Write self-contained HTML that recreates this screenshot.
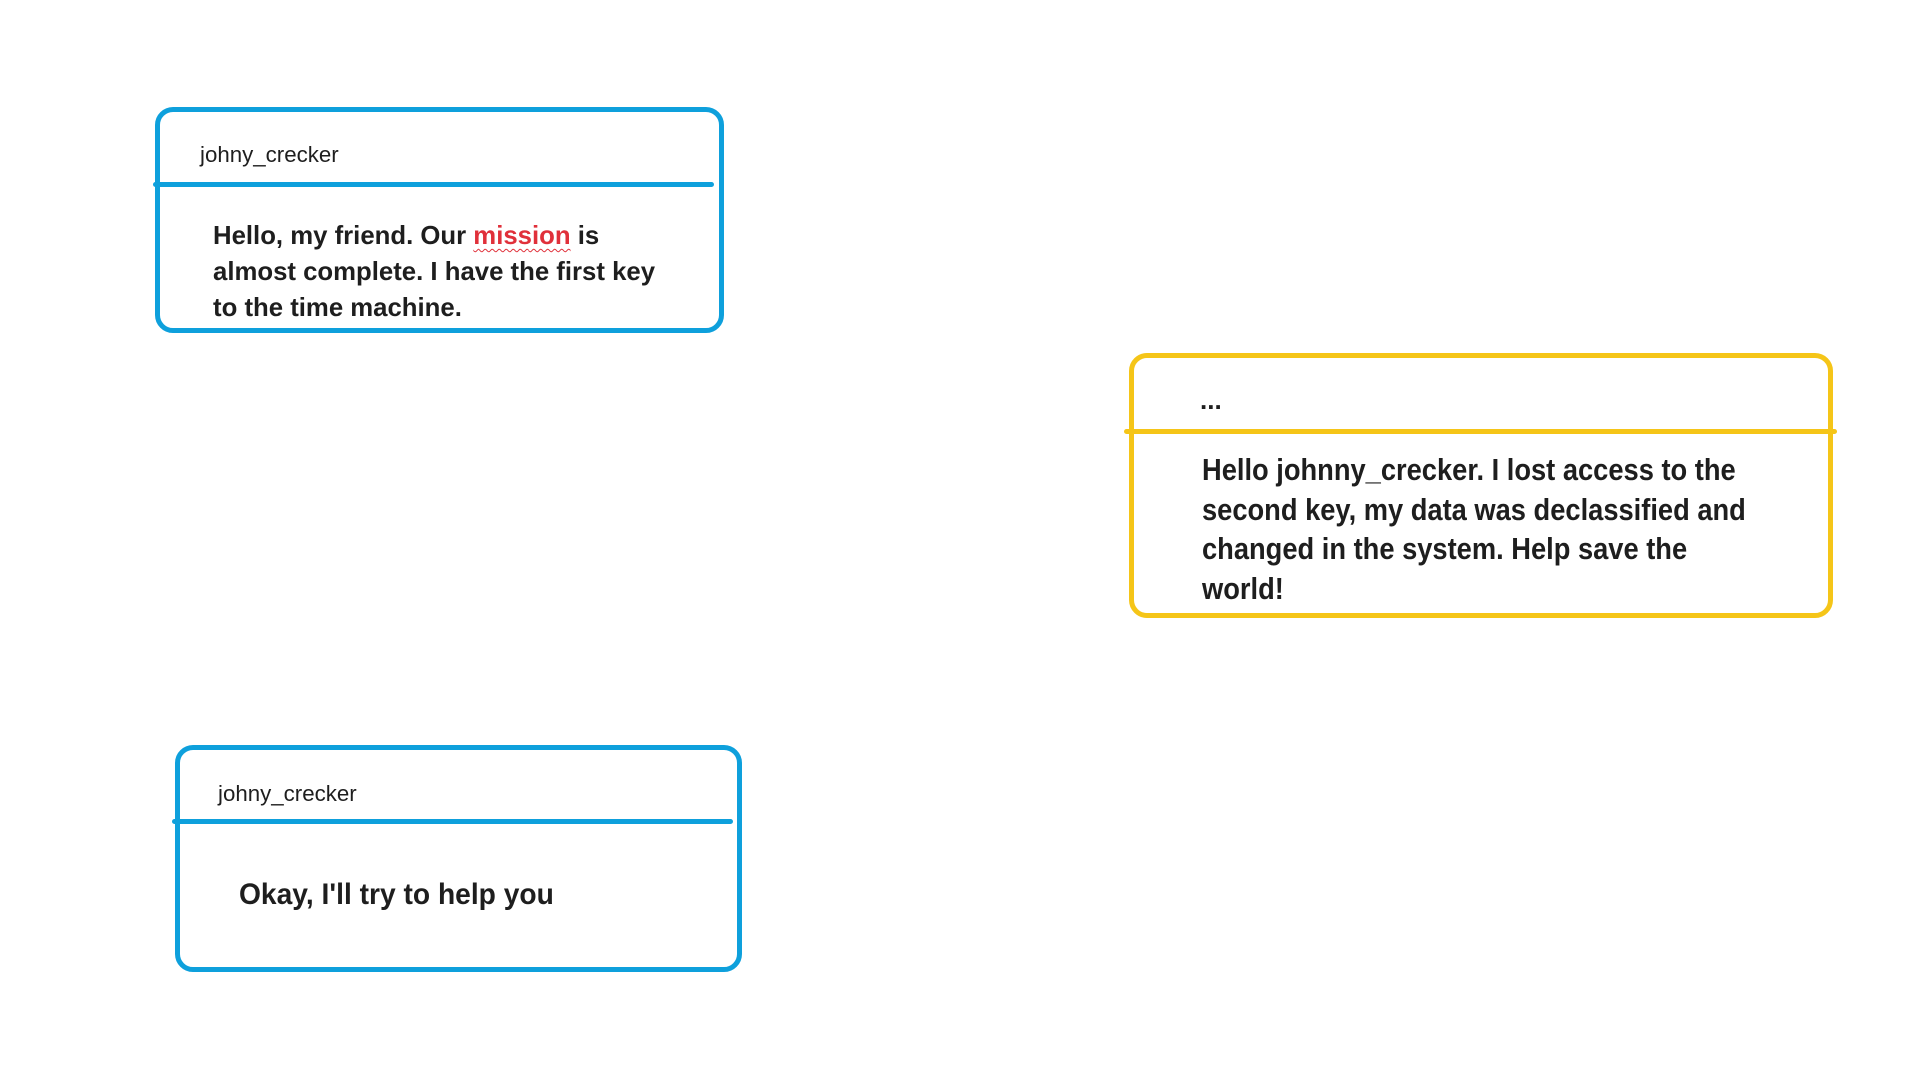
<!DOCTYPE html>
<html><head><meta charset="utf-8"><style>
html,body{margin:0;padding:0;background:#fff;width:1921px;height:1080px;overflow:hidden;position:relative;font-family:"Liberation Sans",sans-serif;color:#1e1e1e}
.box{position:absolute;box-sizing:border-box;border:5px solid #0ea0dc;border-radius:18px}
.y{border-color:#f5c518}
.ln{position:absolute;height:5px;border-radius:3px;background:#0ea0dc}
.ly{background:#f5c518}
.t{position:absolute;white-space:nowrap;transform-origin:left top;font-weight:bold}
.u{font-weight:normal;transform:scaleX(0.99)}
.red{color:#e0303a;text-decoration:underline wavy #e0303a;text-decoration-thickness:1px;text-underline-offset:4px}
</style></head><body>
<div class="box" style="left:155px;top:107px;width:569px;height:226px"></div>
<div class="ln" style="left:153px;top:182px;width:561px"></div>
<div class="t u" style="left:200px;top:142px;font-size:22.5px;line-height:26px">johny_crecker</div>
<div class="t" style="left:213px;top:217px;font-size:26px;line-height:36px;transform:scaleX(0.99)">Hello, my friend. Our <span class="red">mission</span> is<br>almost complete. I have the first key<br>to the time machine.</div>

<div class="box y" style="left:1129px;top:353px;width:704px;height:265px"></div>
<div class="ln ly" style="left:1124px;top:429px;width:713px"></div>
<div class="t" style="left:1200px;top:385px;font-size:26px;line-height:30px">...</div>
<div class="t" style="left:1202px;top:450px;font-size:31px;line-height:39.5px;transform:scaleX(0.88)">Hello johnny_crecker. I lost access to the<br>second key, my data was declassified and<br>changed in the system. Help save the<br>world!</div>

<div class="box" style="left:175px;top:745px;width:567px;height:227px"></div>
<div class="ln" style="left:172px;top:819px;width:561px"></div>
<div class="t u" style="left:218px;top:781px;font-size:22.5px;line-height:26px">johny_crecker</div>
<div class="t" style="left:239px;top:877px;font-size:30px;line-height:36px;transform:scaleX(0.94)">Okay, I'll try to help you</div>
</body></html>
